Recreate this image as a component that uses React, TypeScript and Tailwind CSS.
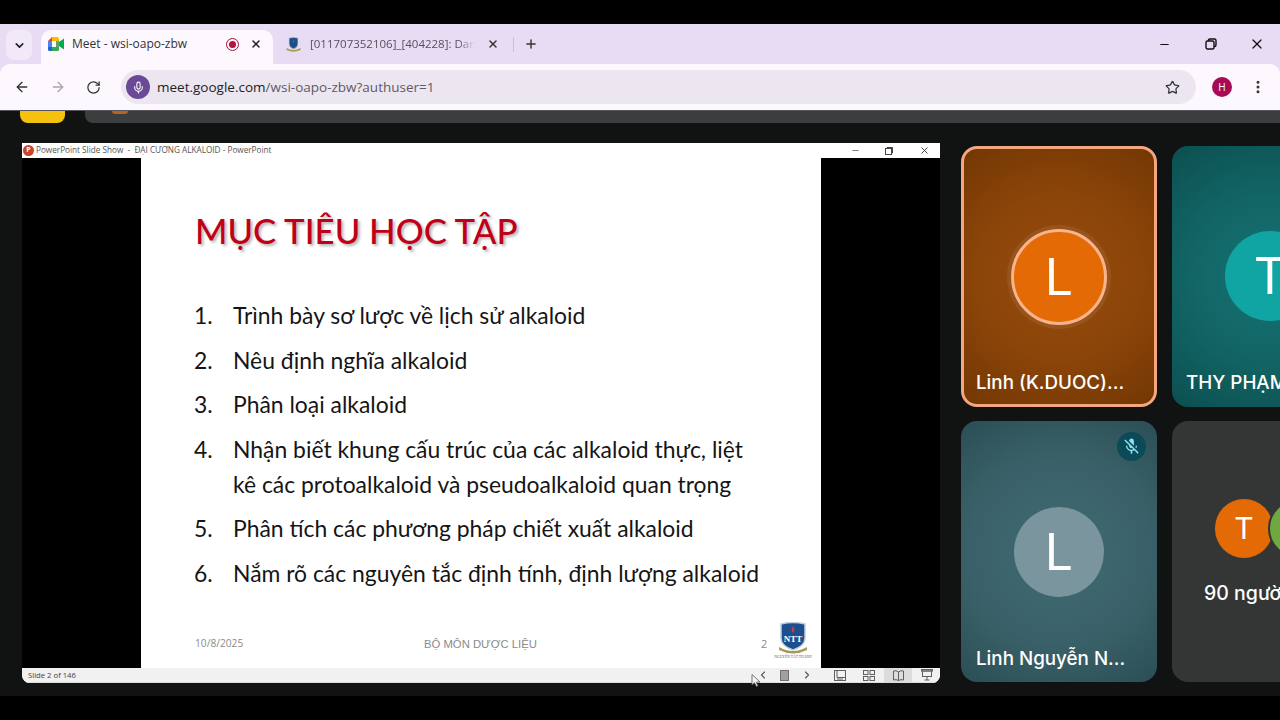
import React from "react";
import { ArrowLeft, ArrowRight, RotateCw, Mic, Star, X, Plus, Minus, ChevronDown, EllipsisVertical, ChevronLeft, ChevronRight } from "lucide-react";

const sans = "font-['Open_Sans','Noto_Sans',sans-serif]";
const calibri = "font-['Lato','Noto_Sans',sans-serif]";
const meet = "font-['Inter','Noto_Sans',sans-serif]";

function MeetLogo() {
  return (
    <svg width="16" height="14" viewBox="0 0 16 14">
      <path d="M0 4 L4 0 V4 Z" fill="#ea4335" />
      <path d="M0 4 H4 V10 H0 Z" fill="#4285f4" />
      <path d="M0 10 H4 V14 H1.5 Q0 14 0 12.5 Z" fill="#1967d2" />
      <path d="M4 0 H9.5 Q11 0 11 1.5 V4 H4 Z" fill="#fbbc04" />
      <path d="M4 10 H11 V12.5 Q11 14 9.5 14 H4 Z" fill="#34a853" />
      <path d="M11 5 L16 1.5 V12.5 L11 9 Z" fill="#00ac47" />
      <path d="M11 4 V10 H8 V4 Z" fill="#188038" opacity="0.7" />
    </svg>
  );
}

function Crest({ size = 15 }: { size?: number }) {
  return (
    <svg width={size} height={size} viewBox="0 0 30 30">
      <path d="M6 2 Q15 -1 24 2 V14 Q24 21 15 24 Q6 21 6 14 Z" fill="#1f4d87" stroke="#c9d6e4" strokeWidth="1.5" />
      <path d="M15 5 Q18 9 15 12 Q12 9 15 5 Z" fill="#c2413a" />
      <path d="M1 22 Q15 30 29 22 L29 26 Q15 33 1 26 Z" fill="#a89a4e" />
    </svg>
  );
}

function ToolIcon({ kind }: { kind: "normal" | "sorter" | "reading" | "show" }) {
  const c = "#5f5f5f";
  if (kind === "normal")
    return (
      <svg width="12" height="11" viewBox="0 0 12 11" fill="none" stroke={c}>
        <rect x="0.5" y="0.5" width="11" height="10" />
        <path d="M3 1 V7.5 H11 M3 9 H9" />
      </svg>
    );
  if (kind === "sorter")
    return (
      <svg width="12" height="11" viewBox="0 0 12 11" fill="none" stroke={c}>
        <rect x="0.5" y="0.5" width="4.5" height="4" />
        <rect x="7" y="0.5" width="4.5" height="4" />
        <rect x="0.5" y="6.5" width="4.5" height="4" />
        <rect x="7" y="6.5" width="4.5" height="4" />
      </svg>
    );
  if (kind === "reading")
    return (
      <svg width="11" height="11" viewBox="0 0 11 11" fill="none" stroke={c}>
        <path d="M5.5 2 Q3 0 0.5 1 V10 Q3 9 5.5 10.5 Q8 9 10.5 10 V1 Q8 0 5.5 2 Z M5.5 2 V10.5" />
      </svg>
    );
  return (
    <svg width="12" height="12" viewBox="0 0 12 12" fill="none" stroke={c}>
      <rect x="0.5" y="0.5" width="11" height="1.5" />
      <rect x="1.5" y="2" width="9" height="5.5" />
      <path d="M6 7.5 V11 M3.5 11 H8.5" />
    </svg>
  );
}

const items: string[][] = [
  ["Trình bày sơ lược về lịch sử alkaloid"],
  ["Nêu định nghĩa alkaloid"],
  ["Phân loại alkaloid"],
  ["Nhận biết khung cấu trúc của các alkaloid thực, liệt", "kê các protoalkaloid và pseudoalkaloid quan trọng"],
  ["Phân tích các phương pháp chiết xuất alkaloid"],
  ["Nắm rõ các nguyên tắc định tính, định lượng alkaloid"],
];

function Tile({ className, children }: { className: string; children: React.ReactNode }) {
  return <div className={"relative shrink-0 w-[196px] h-[261px] rounded-[16px] overflow-hidden flex flex-col items-center " + className}>{children}</div>;
}

export default function App() {
  return (
    <div className="relative w-[1280px] h-[720px] overflow-hidden bg-black flex flex-col">
      <div className="h-6 shrink-0 bg-black" />
      {/* tab strip */}
      <div className={"h-10 shrink-0 bg-[#e8dcf4] flex items-end text-[#3a3a3f] " + sans}>
        <div className="w-[26px] h-[30px] ml-[6px] mb-[4px] rounded-lg bg-[#f1e9f8] flex items-center justify-center">
          <ChevronDown size={13} strokeWidth={3} color="#222" />
        </div>
        <div className="w-[232px] h-[34px] ml-[9px] pb-[6px] rounded-t-[10px] bg-[#fdf7fe] flex items-center pl-[7px]">
          <MeetLogo />
          <span className="ml-[8px] text-[12px] w-[154px] whitespace-nowrap text-[#333]">Meet - wsi-oapo-zbw</span>
          <span className="w-[13px] h-[13px] rounded-full border-[1.5px] border-[#9c1238] flex items-center justify-center">
            <span className="w-[7px] h-[7px] rounded-full bg-[#b3143e]" />
          </span>
          <X size={12} strokeWidth={3} color="#222" className="ml-[11px]" />
        </div>
        <div className="h-[34px] pb-[6px] flex items-center pl-[13px]">
          <Crest />
          <span className="ml-[9px] w-[165px] overflow-hidden whitespace-nowrap text-[11.5px] text-[#55505c] [mask-image:linear-gradient(to_right,black_90%,transparent)]">[011707352106]_[404228]: Danh</span>
          <X size={12} strokeWidth={3} color="#333" className="ml-[12px]" />
          <span className="ml-[14px] w-px h-[15px] bg-[#cbbfe0]" />
          <Plus size={14} strokeWidth={2.5} color="#333" className="ml-[10px]" />
        </div>
        <div className="ml-auto h-[40px] flex items-center pr-[15px]">
          <Minus size={13} strokeWidth={2} color="#111" />
          <svg width="12" height="12" viewBox="0 0 12 12" fill="none" stroke="#111" strokeWidth="1.4" className="ml-[34px]">
            <rect x="1" y="3" width="8" height="8" rx="1.5" />
            <path d="M3.5 3 V2.2 Q3.5 1 4.8 1 H9.5 Q11 1 11 2.5 V7 Q11 8.5 9.5 8.5 H9" />
          </svg>
          <X size={16} strokeWidth={1.8} color="#111" className="ml-[32px]" />
        </div>
      </div>
      {/* toolbar */}
      <div className="h-[47px] shrink-0 bg-[#e8dcf4]">
        <div className={"h-[47px] bg-[#fdf7fe] rounded-tl-[10px] rounded-tr-[10px] flex items-center border-b border-[#55555a] " + sans}>
          <ArrowLeft size={16} strokeWidth={2} color="#333" className="ml-[14px]" />
          <ArrowRight size={16} strokeWidth={2} color="#aaa5ad" className="ml-[20px]" />
          <RotateCw size={15} strokeWidth={2} color="#333" className="ml-[20px]" />
          <div className="ml-[20px] w-[1075px] h-[34px] rounded-full bg-[#ece6f0] flex items-center pl-[5px]">
            <span className="w-[24px] h-[24px] rounded-full bg-[#6a4a96] flex items-center justify-center">
              <Mic size={13} strokeWidth={2} color="#fff" />
            </span>
            <span className="ml-[7px] text-[13.5px] text-[#222] whitespace-nowrap">
              meet.google.com<span className="text-[#5e5a66]">/wsi-oapo-zbw?authuser=1</span>
            </span>
            <Star size={15} strokeWidth={2} color="#333" className="ml-auto mr-[16px]" />
          </div>
          <span className="ml-[16px] w-[20px] h-[20px] rounded-full bg-[#a70a56] text-white text-[10px] flex items-center justify-center">H</span>
          <EllipsisVertical size={16} strokeWidth={2.5} color="#333" className="ml-[18px]" />
        </div>
      </div>
      {/* meet */}
      <div className="h-[585px] shrink-0 bg-[#111212] overflow-hidden">
        <div className="h-[12px] flex">
          <div className="ml-[20px] w-[45px] h-[12px] rounded-b-[8px] bg-[#f4c20d]" />
          <div className="ml-[20px] flex-1 rounded-bl-[8px] bg-[#3b3e3e]">
            <div className="ml-[27px] w-[16px] h-[3px] rounded-b-full bg-[#b5651d]" />
          </div>
        </div>
        <div className="flex pl-[22px] pt-[20px]">
          {/* slide window */}
          <div className={"w-[918px] h-[540px] shrink-0 bg-white rounded-b-[8px] overflow-hidden flex flex-col " + sans}>
            <div className="h-[15px] shrink-0 bg-white flex items-center">
              <span className="ml-[1px] w-[11px] h-[11px] rounded-full bg-[#c8452a] text-white text-[7px] font-bold flex items-center justify-center">P</span>
              <span className="ml-[2px] text-[8.2px] text-[#555] whitespace-pre">PowerPoint Slide Show  -  ĐẠI CƯƠNG ALKALOID - PowerPoint</span>
              <Minus size={9} color="#555" className="ml-auto" />
              <svg width="8" height="8" viewBox="0 0 8 8" fill="none" stroke="#444" className="ml-[25px]">
                <rect x="0.5" y="1.5" width="6" height="6" />
                <path d="M2 1.5 V0.5 H7.5 V6 H6.5" />
              </svg>
              <X size={11} color="#333" className="ml-[26px] mr-[10px]" />
            </div>
            <div className="h-[510px] shrink-0 bg-black flex">
              <div className={"relative w-[680px] h-[510px] ml-[119px] bg-white " + calibri}>
                <div className="pl-[54px] pt-[51px] text-[34.8px] leading-[44px] font-medium text-[#c00018] whitespace-nowrap [text-shadow:2px_2px_3px_rgba(0,0,0,0.3)]">MỤC TIÊU HỌC TẬP</div>
                <ol className="mt-[45px] pl-[53px] text-[#151515] text-[22.9px] leading-[35px]">
                  {items.map((lines, i) => (
                    <li key={i} className="flex mb-[9.6px]">
                      <span className="w-[39px] shrink-0">{i + 1}.</span>
                      <div className="whitespace-nowrap">
                        {lines.map((l) => (
                          <div key={l}>{l}</div>
                        ))}
                      </div>
                    </li>
                  ))}
                </ol>
                <div className={"absolute left-[54px] top-[478px] text-[10.2px] text-[#8b8b8b] " + sans}>10/8/2025</div>
                <div className="absolute left-[283px] top-[478px] text-[11.3px] text-[#8b8b8b] whitespace-nowrap font-['Liberation_Sans',sans-serif]">BỘ MÔN DƯỢC LIỆU</div>
                <div className={"absolute left-[620px] top-[478px] text-[11px] text-[#8b8b8b] " + sans}>2</div>
                <div className="absolute left-[632px] top-[464px] flex flex-col items-center w-[40px]">
                  <svg width="34" height="33" viewBox="0 0 34 33">
                    <path d="M5 2 Q17 -1 29 2 V16 Q29 24 17 28 Q5 24 5 16 Z" fill="#1d4f8c" stroke="#bcd0e2" strokeWidth="1.5" />
                    <path d="M17 4 Q20 8 17 11 Q14 8 17 4 Z" fill="#b8433e" />
                    <text x="17" y="20" fontSize="9" fontWeight="700" fill="#fff" textAnchor="middle" fontFamily="Liberation Serif, serif">NTT</text>
                    <path d="M3 25 Q17 33 31 25 L31 28 Q17 35 3 28 Z" fill="#a69a58" />
                  </svg>
                  <span className="text-[3.7px] leading-[5px] text-[#555] whitespace-nowrap font-['Liberation_Serif',serif]">NGUYỄN TẤT THÀNH</span>
                </div>
              </div>
            </div>
            <div className="h-[15px] shrink-0 bg-[#f1f1f1] flex items-center text-[#444] border-b border-[#ddd]">
              <span className="ml-[6px] mt-[2px] text-[7.7px]">Slide 2 of 146</span>
              <div className="ml-auto flex items-center mr-[7px]">
                <ChevronLeft size={12} strokeWidth={2.2} color="#555" />
                <span className="ml-[11px] w-[9px] h-[11px] bg-[#a0a0a0] border border-[#707070]" />
                <ChevronRight size={12} strokeWidth={2.2} color="#555" className="ml-[12px]" />
                <span className="ml-[21px] flex"><ToolIcon kind="normal" /></span>
                <span className="ml-[17px] flex"><ToolIcon kind="sorter" /></span>
                <span className="ml-[9px] w-[28px] h-[15px] bg-[#dcdcdc] flex items-center justify-center"><ToolIcon kind="reading" /></span>
                <span className="ml-[9px] flex"><ToolIcon kind="show" /></span>
              </div>
            </div>
          </div>
          {/* tiles */}
          <div className={"ml-[21px] mt-[3px] grid grid-cols-[196px_196px] grid-rows-[261px_261px] gap-x-[15px] gap-y-[14px] shrink-0 text-white " + meet}>
            <Tile className="border-[3px] border-[#f4a77e] bg-[radial-gradient(circle_at_center,#964a0c_0%,#8c4509_50%,#733704_100%)]">
              <div className="mt-[76px] w-[104px] h-[104px] rounded-full bg-[#ffffff12] flex items-center justify-center">
                <div className="w-[96px] h-[96px] rounded-full bg-[#e46a06] border-[3px] border-[#f9b48c] flex items-center justify-center text-[50px] font-normal">L</div>
              </div>
              <span className="absolute left-[12px] bottom-[7px] text-[18.8px] font-medium whitespace-nowrap">Linh (K.DUOC)...</span>
            </Tile>
            <Tile className="bg-[radial-gradient(circle_at_center,#167272_0%,#126565_50%,#0c4f50_100%)]">
              <div className="mt-[85px] w-[90px] h-[90px] rounded-full bg-[#10a5a2] flex items-center justify-center text-[50px] font-normal">T</div>
              <span className="absolute left-[14px] bottom-[10px] text-[18.8px] font-medium whitespace-nowrap">THY PHẠM</span>
            </Tile>
            <Tile className="bg-[radial-gradient(circle_at_center,#406a72_0%,#3a6169_55%,#2b4e55_100%)]">
              <span className="absolute top-[11px] right-[11px] w-[29px] h-[29px] rounded-full bg-[#0b4a58] flex items-center justify-center">
                <svg width="19" height="19" viewBox="0 0 24 24" fill="#8fe0f0">
                  <path d="M19 11h-1.7c0 .74-.16 1.43-.43 2.05l1.23 1.23c.56-.98.9-2.09.9-3.28zm-4.02.17c0-.06.02-.11.02-.17V5c0-1.66-1.34-3-3-3S9 3.34 9 5v.18l5.98 5.99zM4.27 3L3 4.27l6.01 6.01V11c0 1.66 1.33 3 2.99 3 .22 0 .44-.03.65-.08l1.66 1.66c-.71.33-1.5.52-2.31.52-2.76 0-5.3-2.1-5.3-5.1H5c0 3.41 2.72 6.23 6 6.72V21h2v-3.28c.91-.13 1.77-.45 2.54-.9L19.73 21 21 19.73 4.27 3z" />
                </svg>
              </span>
              <div className="mt-[86px] w-[90px] h-[90px] rounded-full bg-[#7a959e] flex items-center justify-center text-[50px] font-normal">L</div>
              <span className="absolute left-[15px] bottom-[9px] text-[18.8px] font-medium whitespace-nowrap">Linh Nguyễn N...</span>
            </Tile>
            <Tile className="bg-[#343636]">
              <div className="absolute left-[43px] top-[78px] flex">
                <div className="w-[58px] h-[59px] rounded-full bg-[#e46a06] flex items-center justify-center text-[30px] font-normal">T</div>
                <div className="relative -ml-[5px] w-[59px] h-[59px] rounded-full bg-[#6fa83f] border-2 border-[#343636]" />
              </div>
              <span className="absolute left-[32px] top-[158px] text-[19.5px] font-medium whitespace-nowrap">90 người khác</span>
            </Tile>
          </div>
        </div>
      </div>
      <div className="h-6 shrink-0 bg-black" />
      {/* mouse cursor */}
      <svg width="10" height="13" viewBox="0 0 10 13" className="absolute left-[751px] top-[674px]">
        <path d="M1 0.5 V11 L3.5 8.8 L5.5 12.5 L7 11.8 L5.2 8.2 L9 8 Z" fill="#f4f4f4" stroke="#555" strokeWidth="0.8" />
      </svg>
    </div>
  );
}
